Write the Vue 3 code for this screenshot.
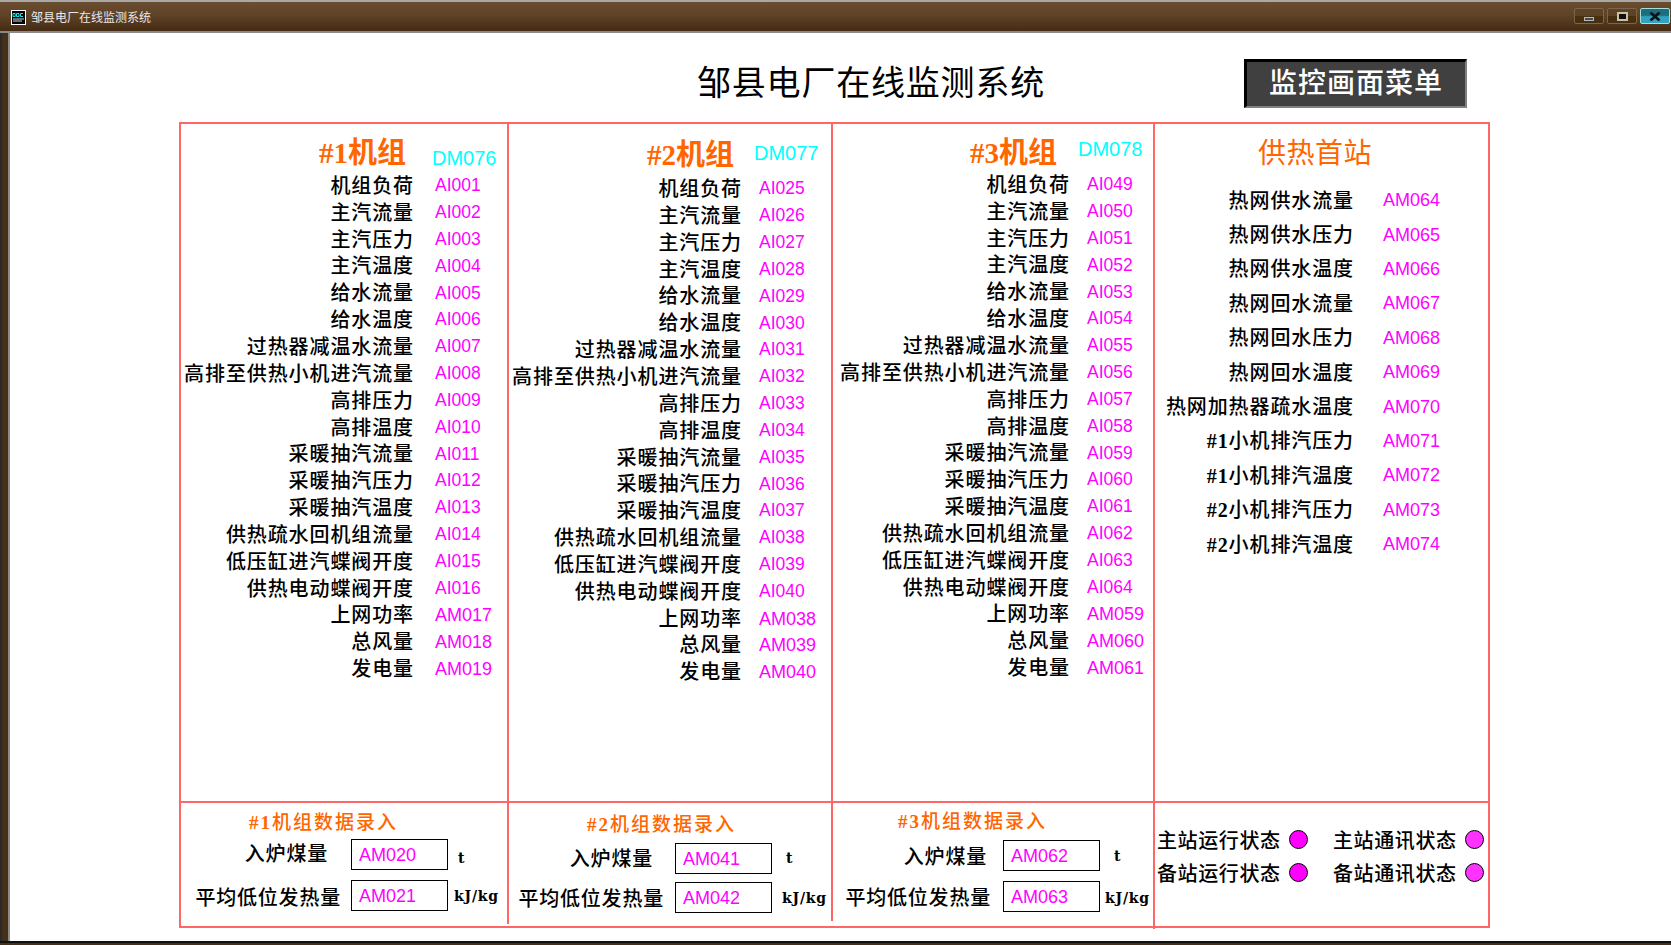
<script setup>
const labels = ['机组负荷','主汽流量','主汽压力','主汽温度','给水流量','给水温度','过热器减温水流量','高排至供热小机进汽流量','高排压力','高排温度','采暖抽汽流量','采暖抽汽压力','采暖抽汽温度','供热疏水回机组流量','低压缸进汽蝶阀开度','供热电动蝶阀开度','上网功率','总风量','发电量']
const pad = n => String(n).padStart(3, '0')
const unit = (ai, am) => labels.map((label, i) => ({
  label,
  code: i < 16 ? 'AI' + pad(ai + i) : 'AM' + pad(am + i - 16)
}))
const units = [
  { cls: 'u1', name: '#1机组', dm: 'DM076', rows: unit(1, 17) },
  { cls: 'u2', name: '#2机组', dm: 'DM077', rows: unit(25, 38) },
  { cls: 'u3', name: '#3机组', dm: 'DM078', rows: unit(49, 59) }
]
const stationLabels = [
  ['', '热网供水流量'], ['', '热网供水压力'], ['', '热网供水温度'], ['', '热网回水流量'], ['', '热网回水压力'], ['', '热网回水温度'],
  ['', '热网加热器疏水温度'], ['#1', '小机排汽压力'], ['#1', '小机排汽温度'], ['#2', '小机排汽压力'], ['#2', '小机排汽温度']
]
const station = stationLabels.map(([mark, label], i) => ({ mark, label, code: 'AM' + pad(64 + i) }))
const inputs = [
  { cls: 'i1', mark: '#1', title: '机组数据录入', a: 'AM020', b: 'AM021' },
  { cls: 'i2', mark: '#2', title: '机组数据录入', a: 'AM041', b: 'AM042' },
  { cls: 'i3', mark: '#3', title: '机组数据录入', a: 'AM062', b: 'AM063' }
]
</script>

<template>
  <div class="win">
    <div class="titlebar">
      <svg class="appicon" width="15" height="15" viewBox="0 0 15 15">
        <rect x="0.5" y="0.5" width="14" height="14" fill="#000" stroke="#fff" />
        <path d="M2 3.5h2.2v3H2zM5.5 3.5h2.5v3H5.5zM12 3.5H9.5v3H12" fill="none" stroke="#19e6f0" />
        <path d="M2 9h11M2 11h9" stroke="#ddd" />
      </svg>
      <span class="wintitle">邹县电厂在线监测系统</span>
      <div class="winbtns">
        <div class="wb"><i class="min"></i></div>
        <div class="wb"><i class="max"></i></div>
        <div class="wb close"><svg width="12" height="9" viewBox="0 0 12 9"><path d="M1.5 0.5L10.5 8.5M10.5 0.5L1.5 8.5" stroke="#111" stroke-width="2.6" /></svg></div>
      </div>
    </div>
    <div class="body">
      <div class="frame"></div>
      <div class="canvas">
        <header class="head">
          <h1 class="title">邹县电厂在线监测系统</h1>
          <div class="menu">监控画面菜单</div>
        </header>
        <div class="board">
          <section v-for="u in units" :key="u.cls" class="col" :class="u.cls">
            <div class="colhead">
              <span class="uname">{{ u.name }}</span>
              <span class="dm">{{ u.dm }}</span>
            </div>
            <div v-for="r in u.rows" :key="r.code" class="row">
              <span class="lab">{{ r.label }}</span>
              <span class="val" :class="{ ai: r.code.startsWith('AI') }">{{ r.code }}</span>
            </div>
          </section>
          <section class="col st">
            <div class="sthead">供热首站</div>
            <div v-for="r in station" :key="r.code" class="row">
              <span class="lab"><b v-if="r.mark" class="mark">{{ r.mark }}</b>{{ r.label }}</span>
              <span class="val">{{ r.code }}</span>
            </div>
          </section>

          <section v-for="c in inputs" :key="c.cls" class="cell" :class="c.cls">
            <div class="celltitle"><b class="mark">{{ c.mark }}</b>{{ c.title }}</div>
            <div class="irow first">
              <span class="ilab">入炉煤量</span>
              <span class="box">{{ c.a }}</span>
              <span class="un">t</span>
            </div>
            <div class="irow second">
              <span class="ilab">平均低位发热量</span>
              <span class="box">{{ c.b }}</span>
              <span class="un">kJ/kg</span>
            </div>
          </section>
          <section class="cell status">
            <div class="stat"><span>主站运行状态</span><i class="dot"></i></div>
            <div class="stat"><span>主站通讯状态</span><i class="dot soft"></i></div>
            <div class="stat"><span>备站运行状态</span><i class="dot"></i></div>
            <div class="stat"><span>备站通讯状态</span><i class="dot soft"></i></div>
          </section>
        </div>
      </div>
    </div>
    <div class="foot"></div>
  </div>
</template>

<style scoped>
.win {
  width: 1671px;
  height: 945px;
  display: flex;
  flex-direction: column;
  overflow: hidden;
  background: #fff;
  --cjk: "Liberation Serif", "Noto Sans CJK SC", serif;
  font-family: var(--cjk);
}
.titlebar {
  height: 33px;
  box-sizing: border-box;
  flex: none;
  display: flex;
  align-items: center;
  padding: 2px 1px 1px 11px;
  background: linear-gradient(#6b4d30 0%, #5f4328 45%, #452b13 100%);
  border-top: 2px solid #a8a8a8;
  border-bottom: 2px solid #8a8a8a;
}
.appicon { flex: none; }
.wintitle {
  margin-left: 5px;
  font: 12px/1 "Noto Sans CJK SC", sans-serif;
  color: #e8e8e8;
}
.winbtns {
  margin-left: auto;
  display: flex;
  gap: 3px;
  margin-top: -2px;
}
.wb {
  width: 30px;
  height: 16px;
  box-sizing: border-box;
  border: 1px solid #7d6548;
  border-radius: 2px;
  background: linear-gradient(#5d4226 50%, #47300f 50%);
  display: flex;
  align-items: center;
  justify-content: center;
}
.wb .min { width: 10px; height: 4px; margin-top: 5px; background: #3e4a55; border: 1px solid #b8b8b8; box-sizing: border-box; }
.wb .max { width: 11px; height: 9px; background: #111; border: 2px solid #c8c0a8; box-sizing: border-box; }
.wb.close {
  border-color: #a8e0d8;
  background: linear-gradient(#1c6d80 45%, #2fa3c0 55%);
}
.body { flex: 1; display: flex; min-height: 0; }
.frame {
  width: 10px;
  flex: none;
  box-sizing: border-box;
  background: #46301a;
  border-left: 2px solid #2a2a2a;
  border-right: 2px solid #8c8c8c;
}
.canvas { flex: 1; min-width: 0; }
.head {
  height: 89px;
  display: flex;
  align-items: flex-start;
  padding-left: 687px;
  box-sizing: border-box;
}
.title {
  margin: 26px 0 0;
  font-size: 34px;
  line-height: 50px;
  font-weight: 400;
  letter-spacing: 0.8px;
  width: 360px;
  white-space: nowrap;
  color: #000;
}
.menu {
  margin: 26px 0 0 187px;
  width: 223px;
  height: 49px;
  box-sizing: border-box;
  background: #404040;
  border-top: 3px solid #000;
  border-left: 3px solid #000;
  border-right: 2px solid #808080;
  border-bottom: 2px solid #808080;
  color: #fff;
  font-size: 28px;
  font-weight: 500;
  letter-spacing: 1px;
  line-height: 44px;
  text-align: center;
}
.board {
  margin-left: 169px;
  width: 1311px;
  height: 806px;
  box-sizing: border-box;
  border: 2px solid #ff6666;
  display: grid;
  grid-template-columns: 328px 324px 322px 333px;
  grid-template-rows: 677px 125px;
}
.col {
  box-sizing: border-box;
  border-right: 2px solid #ff6666;
  --rh: 26.85px;
  --vm: 3px;
  padding-top: var(--pt);
}
.col.st { border-right: 0; }
.u1 { --pt: 9px; --head: 38px; --lw: 233px; --gap: 21px; --hw: 225px; --hg: 26px; --dm: 5px; }
.u2 { --pt: 11px; --head: 39.2px; --lw: 233px; --gap: 17px; --hw: 225px; --hg: 20px; --dm: -2px; }
.u3 { --pt: 9px; --head: 37px; --lw: 237px; --gap: 17px; --hw: 224px; --hg: 21px; --dm: -4px; }
.st { --pt: 9px; --lw: 199px; --gap: 29px; --rh: 34.4px; --vm: 2px; }
.colhead {
  height: var(--head);
  display: flex;
  align-items: flex-start;
  line-height: 40px;
}
.uname {
  width: var(--hw);
  flex: none;
  text-align: right;
  font-size: 29px;
  font-weight: 700;
  color: #ff6600;
}
.dm {
  margin-left: var(--hg);
  margin-top: var(--dm);
  font: 20px/40px "Liberation Sans", sans-serif;
  color: #00ffff;
}
.sthead {
  height: 49px;
  line-height: 42px;
  padding-left: 103px;
  font-size: 28px;
  letter-spacing: 0.5px;
  font-weight: 400;
  color: #ff6600;
}
.row {
  height: var(--rh);
  display: flex;
  align-items: center;
}
.lab {
  width: var(--lw);
  flex: none;
  text-align: right;
  font-size: 20px;
  letter-spacing: 0.9px;
  font-weight: 500;
  color: #000;
  white-space: nowrap;
}
.mark { font-weight: 700; }
.val {
  margin-left: var(--gap);
  margin-top: var(--vm);
  font: 18px/1 "Liberation Sans", sans-serif;
  color: #ff00ff;
}
.val.ai { font-size: 17.5px; }
.cell {
  box-sizing: border-box;
  border-top: 2px solid #ff6666;
  border-right: 2px solid #ff6666;
  align-self: start;
  padding-top: var(--pt);
}
.i1 { --pt: 6px; --mt: 2px; --rg: 10px; --il: 170px; --lp1: 23px; --lp2: 10px; --u1: 10px; --u2: 6px; --tl: 68px; --l1: -4px; --l2: 2px; --t1: 6px; --t2: 0px; height: 123px; }
.i2 { --pt: 8px; --mt: 4px; --rg: 8px; --il: 166px; --lp1: 22px; --lp2: 11px; --u1: 14px; --u2: 10px; --tl: 78px; --l1: -2px; --l2: 0px; --t1: -2px; --t2: 0px; height: 120px; }
.i3 { --pt: 5px; --mt: 4px; --rg: 10px; --il: 170px; --lp1: 16px; --lp2: 12px; --u1: 14px; --u2: 5px; --tl: 65px; --l1: 0px; --l2: 0px; --t1: 0px; --t2: 2px; height: 128px; }
.celltitle {
  height: 28px;
  line-height: 28px;
  padding-left: var(--tl);
  font-size: 19px;
  letter-spacing: 2px;
  font-weight: 500;
  color: #ff6600;
  white-space: nowrap;
}
.irow {
  height: 31px;
  display: flex;
  align-items: center;
}
.irow.first { margin-top: var(--mt); }
.irow.second { margin-top: var(--rg); }
.ilab {
  width: var(--il);
  flex: none;
  box-sizing: border-box;
  text-align: right;
  font-size: 20px;
  letter-spacing: 0.8px;
  font-weight: 500;
  white-space: nowrap;
}
.first .ilab { padding-right: var(--lp1); margin-top: var(--l1); }
.second .ilab { padding-right: var(--lp2); margin-top: var(--l2); }
.box {
  width: 97px;
  height: 31px;
  flex: none;
  box-sizing: border-box;
  border: 1px solid #000;
  padding-left: 7px;
  font: 18px/31px "Liberation Sans", sans-serif;
  color: #ff00ff;
}
.un {
  font-family: "DejaVu Serif", serif;
  font-size: 14px;
  font-weight: 700;
  letter-spacing: 0.8px;
}
.first .un { margin-left: var(--u1); margin-top: var(--t1); }
.second .un { margin-left: var(--u2); margin-top: var(--t2); }
.status {
  border-right: 0;
  padding: 20px 0 0 2px;
  display: grid;
  grid-template-columns: 176px 157px;
  grid-auto-rows: 33px;
  align-content: start;
}
.stat {
  display: flex;
  align-items: center;
  font-size: 20px;
  letter-spacing: 0.6px;
  font-weight: 500;
  white-space: nowrap;
}
.dot {
  width: 19px;
  height: 19px;
  margin-left: 8px;
  flex: none;
  box-sizing: border-box;
  border: 1px solid #000;
  border-radius: 50%;
  background: #ff00ff;
}
.dot.soft { background: #ff33ff; }
.foot {
  height: 4px;
  flex: none;
  background: #46301a;
  border-top: 2px solid #111;
  box-sizing: border-box;
  margin-left: 0;
}
</style>
